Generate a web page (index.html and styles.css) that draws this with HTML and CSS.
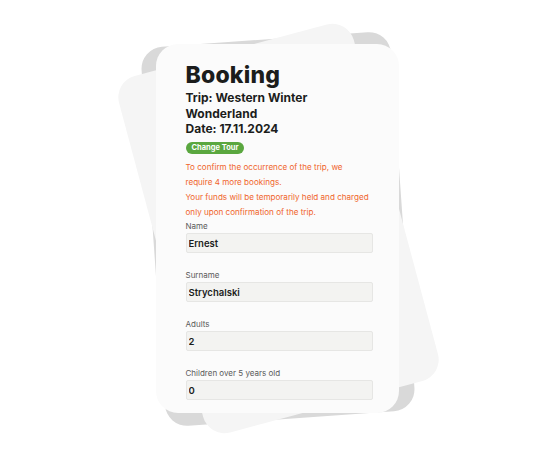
FILE: index.html
```html
<!DOCTYPE html>
<html lang="en">
<head>
    <meta charset="UTF-8">
    <meta name="viewport" content="width=device-width, initial-scale=1.0">
    <title>Booking</title>
    <link rel="stylesheet" href="styles.css">
</head>
<body>

    <div class="stage">
        <div class="sheet sheet-back"></div>
        <div class="sheet sheet-mid"></div>

        <div class="sheet booking">
            <h1>Booking</h1>
            <p class="trip">Trip: Western Winter<br>Wonderland<br>Date: 17.11.2024</p>
            <button class="change-tour">Change Tour</button>

            <p class="notice">
                To confirm the occurrence of the trip, we<br>require 4 more bookings.<br>
                Your funds will be temporarily held and charged<br>only upon confirmation of the trip.
            </p>

            <div class="field">
                <label for="name">Name</label>
                <input type="text" id="name" value="Ernest">
            </div>
            <div class="field">
                <label for="surname">Surname</label>
                <input type="text" id="surname" value="Strychalski">
            </div>
            <div class="field">
                <label for="adults">Adults</label>
                <input type="text" id="adults" value="2">
            </div>
            <div class="field">
                <label for="children">Children over 5 years old</label>
                <input type="text" id="children" value="0">
            </div>
        </div>
    </div>

</body>
</html>
```

FILE: styles.css
```css
body {
    margin: 0;
    background: #fff;
    font-family: Inter, "Noto Sans", sans-serif;
}

.stage {
    width: 556px;
    height: 457px;
    display: grid;
    place-items: center;
}

.sheet {
    grid-area: 1 / 1;
    width: 243px;
    height: 369px;
    border-radius: 22px;
    box-sizing: border-box;
}

.sheet-back {
    width: 250px;
    height: 380px;
    background: #d9d9d9;
    transform: rotate(-4deg);
}

.sheet-mid {
    background: #f5f5f5;
    transform: rotate(-15deg);
}

.booking {
    background: #fbfbfb;
    padding: 17px 27px 0 30px;
    transform: translateX(-1px);
}

h1 {
    margin: 0;
    font-size: 23px;
    line-height: 28px;
    font-weight: 800;
    color: #1b1d1c;
    letter-spacing: 0.2px;
}

.trip {
    margin: 1px 0 0;
    font-size: 12px;
    line-height: 15.5px;
    font-weight: 700;
    color: #1b1d1c;
}

.change-tour {
    display: block;
    margin-top: 5.5px;
    border: none;
    border-radius: 6px;
    padding: 0 6px;
    height: 12px;
    background: #5aa73f;
    color: #fff;
    font-family: inherit;
    font-size: 7.5px;
    font-weight: 700;
    line-height: 12px;
}

.notice {
    margin: 6px 0 0;
    font-size: 8.1px;
    line-height: 15px;
    color: #f0652c;
}

.field {
    display: flex;
    flex-direction: column;
    margin-bottom: 16px;
}

.field label {
    font-size: 8px;
    line-height: 13px;
    color: #5a5a5a;
}

.field input {
    width: 187px;
    height: 20px;
    box-sizing: border-box;
    margin: 0;
    padding: 0 2px;
    border: 1px solid #e6e6e4;
    border-radius: 2px;
    background: #f3f3f1;
    font-family: inherit;
    font-size: 9.5px;
    font-weight: 600;
    color: #1b1d1c;
}
```
